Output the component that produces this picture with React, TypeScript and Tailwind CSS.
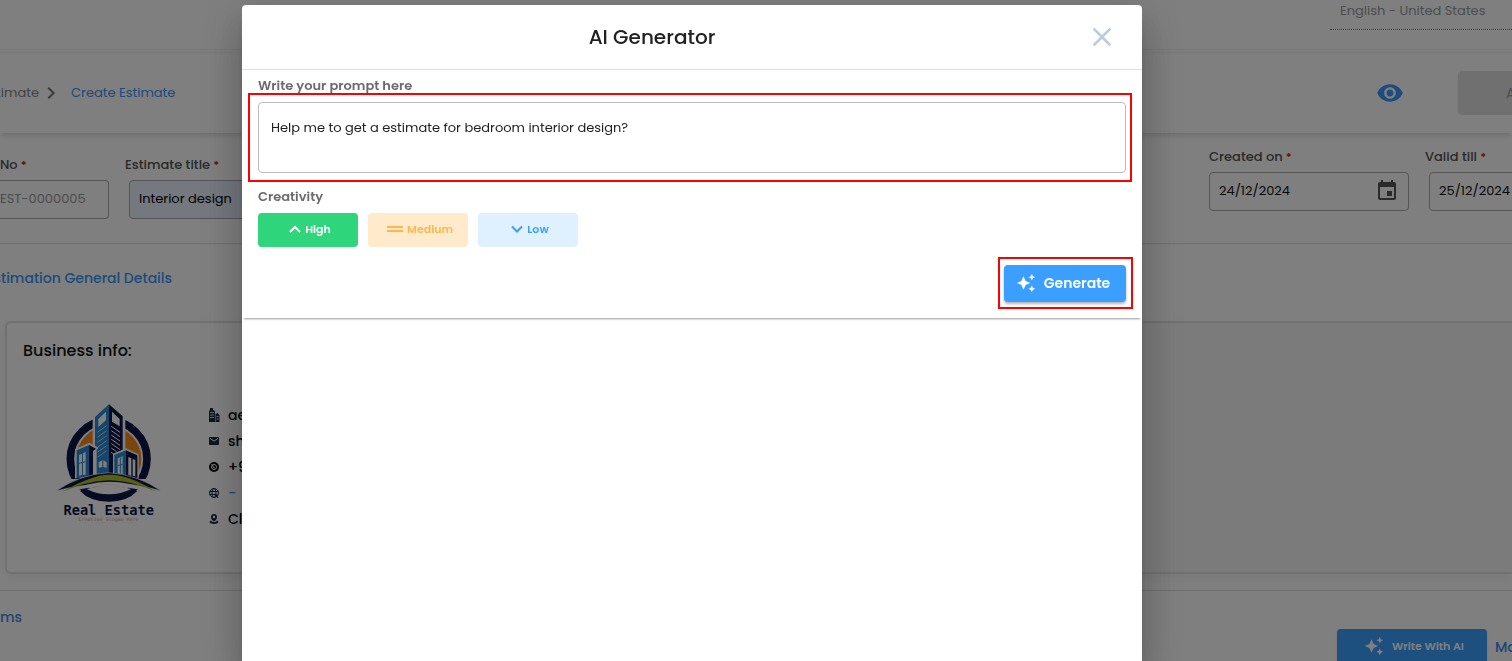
import React from "react";
import { MdAutoAwesome, MdChevronRight, MdClose, MdEmail, MdEvent, MdVisibility } from "react-icons/md";

function Required() {
  return <span className="text-[11px] text-[#e00000]">*</span>;
}

function EstateLogo() {
  return (
    <svg viewBox="45 21 321 363" className="h-[121px] w-[107px]" role="img" aria-label="Real Estate">
      <circle cx="206" cy="192" r="115" fill="none" stroke="#0c1646" strokeWidth="23" />
      <circle cx="206" cy="192" r="98" fill="#f58a1c" />
      <path d="M80 252 L332 252 L300 284 Q206 262 112 284 Z" fill="#fff" />
      <path d="M120 288 Q206 262 292 288 Q262 320 206 320 Q150 320 120 288Z" fill="#0c1646" />
      <path d="M140 282 Q206 262 274 282 Q244 298 206 298 Q168 298 140 282Z" fill="#fff" />
      <path d="M158 62 L206 22 L256 62 L256 245 L158 245Z" fill="#fff" />
      <path d="M165 66 L207 28 L207 240 L165 240Z" fill="#2b8bd2" />
      <path d="M207 28 L248 64 L248 240 L207 240Z" fill="#0c1646" />
      <path d="M175 72 L198 50 L198 76 L175 96Z M216 50 L239 72 L239 94 L216 80Z" fill="#fff" />
      <path d="M172 112 L200 92 M172 127 L200 107 M172 142 L200 122 M172 157 L200 137 M172 172 L200 152 M172 187 L200 167" stroke="#fff" strokeWidth="2" />
      <path d="M214 94 L240 112 M214 107 L240 125 M214 120 L240 138 M214 133 L240 151 M214 146 L240 164 M214 159 L230 170 M214 172 L222 178" stroke="#fff" strokeWidth="3" />
      <path d="M176 202 L187 196 L187 216 L176 218Z M190 196 L200 202 L200 218 L190 216Z" fill="#fff" />
      <path d="M105 162 L148 143 L176 158 L170 164 L170 245 L105 250Z" fill="#fff" />
      <path d="M110 166 L147 150 L147 244 L110 250Z" fill="#2b8bd2" />
      <path d="M147 150 L168 161 L159 168 L159 242 L147 244Z" fill="#0c1646" />
      <path d="M117 180 L126 176 L126 240 L117 242Z M129 175 L137 171 L137 239 L129 240Z" fill="#fff" />
      <path d="M117 205 L137 200" stroke="#2b8bd2" strokeWidth="3" />
      <path d="M219 176 L258 160 L296 178 L296 250 L219 245Z" fill="#fff" />
      <path d="M223 180 L258 166 L258 245 L223 240Z" fill="#2b8bd2" />
      <path d="M258 166 L292 181 L292 249 L258 245Z" fill="#0c1646" />
      <path d="M233 190 L248 184 L248 238 L233 236Z M265 186 L274 190 L274 242 L265 240Z M278 192 L286 195 L286 244 L278 242Z" fill="#fff" />
      <path d="M233 212 L248 208 M241 187 L241 237" stroke="#2b8bd2" strokeWidth="3" />
      <path d="M48 288 Q120 238 206 233 Q292 238 364 288 Q280 262 206 268 Q130 266 48 288Z" fill="#0c1646" stroke="#fff" strokeWidth="2" />
      <path d="M64 292 Q120 258 178 242 Q206 236 240 242 Q290 252 348 290 Q270 256 206 256 Q140 258 64 292Z" fill="#b3bd25" />
      <path d="M84 288 Q140 262 206 260 Q272 260 330 286 Q270 268 206 268 Q140 270 84 288Z" fill="#fff" />
      <text x="206" y="359" textAnchor="middle" fontFamily="'DejaVu Sans Mono', monospace" fontWeight="700" fontSize="41" fill="#0c1646">Real Estate</text>
      <text x="206" y="379" textAnchor="middle" fontFamily="'DejaVu Sans Mono', monospace" fontSize="15" fill="#c9a08c">Creative Slogan Here</text>
    </svg>
  );
}

function Buildings() {
  return (
    <svg viewBox="0 0 12 14" className="h-[14px] w-3" aria-hidden="true">
      <path d="M1 14V3l1-1V0h3v2l2 1v11z" fill="#1c2b3f" />
      <path d="M7.500 14V6l2-1 2 2v7z" fill="#1c2b3f" />
      <path d="M2 4.500h4M2 7h4M2 9.500h4M8.500 8.500h2M8.500 11h2" stroke="#fff" strokeWidth="0.8" />
    </svg>
  );
}

function PhoneBadge() {
  return (
    <svg viewBox="0 0 20 20" className="size-[10px]" aria-hidden="true">
      <circle cx="10" cy="10" r="10" fill="#000" />
      <circle cx="10" cy="10" r="5" fill="none" stroke="#fff" strokeWidth="2" />
      <path d="M8 8c0 3 1 4 4 4M5 5l4 3" stroke="#fff" strokeWidth="2" fill="none" />
    </svg>
  );
}

function Globe() {
  return (
    <svg viewBox="0 0 20 20" className="size-[10px]" fill="none" stroke="#1c2b3f" strokeWidth="2" aria-hidden="true">
      <circle cx="10" cy="10" r="9" />
      <ellipse cx="10" cy="10" rx="4" ry="9" />
      <path d="M1 7h18M1 13h11" />
      <path d="M11 11l8 3-3 1 3 4-2 1-3-4-2 2z" fill="#1c2b3f" stroke="none" />
    </svg>
  );
}

function PersonPin() {
  return (
    <svg viewBox="0 0 20 20" className="size-[10px]" aria-hidden="true">
      <path d="M10 0a6 6 0 0 1 6 6c0 4-3 7-6 9-3-2-6-5-6-9a6 6 0 0 1 6-6z" fill="#1c2b3f" />
      <circle cx="10" cy="6" r="2.5" fill="#fff" />
      <path d="M4 13c-6 3-2 7 6 7s12-4 6-7l-3 3h-6z" fill="#1c2b3f" />
    </svg>
  );
}

function Caret({ down = false }: { down?: boolean }) {
  return (
    <svg viewBox="0 0 12 8" className="h-2 w-3" fill="none" stroke="currentColor" strokeWidth="2" aria-hidden="true">
      <path d={down ? "M1 1.500l5 5 5-5" : "M1 7l5-5 5 5"} />
    </svg>
  );
}

function DateField({ id, label, value, inset = false }: { id: string; label: string; value: string; inset?: boolean }) {
  return (
    <div className="shrink-0">
      <label htmlFor={id} className="block h-[23px] text-[13px] leading-4 font-medium text-[#555]">
        {label} <Required />
      </label>
      <div className={`${inset ? "ml-1" : ""} flex h-[39px] w-[200px] items-center rounded border border-[#aaa] px-[9px] pb-0.5`}>
        <input id={id} defaultValue={value} className="min-w-0 flex-1 text-[13px] text-[#111] outline-none" />
        <button type="button" aria-label="Open calendar" className="text-[#555]">
          <MdEvent className="size-6" />
        </button>
      </div>
    </div>
  );
}

const contacts = [
  { icon: <Buildings />, text: "ae" },
  { icon: <MdEmail className="size-3" />, text: "sh" },
  { icon: <PhoneBadge />, text: "+9" },
  { icon: <Globe />, text: "-", link: true },
  { icon: <PersonPin />, text: "Cl" },
];

function EstimatePage() {
  return (
    <div className="flex h-screen flex-col overflow-hidden bg-white">
      <header className="flex h-[50px] shrink-0 justify-end border-b border-[#eee]">
        <select disabled aria-label="Language" className="h-[30px] w-[182px] appearance-none border-b border-dotted border-[#777] px-[10px] pb-2 text-[13px] text-[#999] opacity-100">
          <option>English - United States</option>
        </select>
      </header>
      <div className="mt-0.5 flex h-[81px] shrink-0 items-center justify-between border-t border-[#f5f5f5] shadow-md">
        <nav aria-label="Breadcrumb" className="flex items-center text-[13px]">
          <span className="flex w-[39px] justify-end overflow-hidden text-[#888]">Estimate</span>
          <MdChevronRight className="size-6 text-[#777]" />
          <a href="#create" className="pl-2 text-[#3a95f5]">Create Estimate</a>
        </nav>
        <div className="flex items-center gap-[54px]">
          <button type="button" aria-label="Preview" className="text-[#3a9bfc]">
            <MdVisibility className="size-7" />
          </button>
          <button type="button" disabled className="h-11 w-[54px] overflow-hidden rounded-l bg-[#e0e0e0] pl-12 text-left text-sm text-[#a0a0a0]">A</button>
        </div>
      </div>

      <div className="flex h-[111px] shrink-0 justify-between border-b border-[#dcdcdc]">
        <div className="flex gap-4 pt-6">
          <div className="w-[109px]">
            <label htmlFor="no" className="block h-[23px] text-[13px] leading-4 font-medium text-[#555]">No <Required /></label>
            <input id="no" disabled defaultValue="EST-0000005" className="h-[39px] w-full rounded-r border border-l-0 border-[#aaa] pb-0.5 text-[13px] text-[#999]" />
          </div>
          <div className="w-[220px]">
            <label htmlFor="title" className="block h-[23px] text-[13px] leading-4 font-medium text-[#555]">Estimate title <Required /></label>
            <input id="title" defaultValue="Interior design" className="ml-1 h-[39px] w-[216px] rounded border border-[#aaa] bg-[#e8f0fe] px-[9px] pb-0.5 text-[13px] text-black" />
          </div>
        </div>
        <div className="flex w-[303px] gap-4 overflow-hidden pt-4">
          <DateField id="created" label="Created on" value="24/12/2024" />
          <DateField id="valid" label="Valid till" value="25/12/2024" inset />
        </div>
      </div>

      <section className="h-[347px] shrink-0 border-b border-[#dcdcdc] pt-6">
        <h2 className="flex h-[53px] w-[172px] justify-end overflow-hidden text-sm font-medium whitespace-nowrap text-[#3a95f5]">Estimation General Details</h2>
        <div className="ml-[5px] flex h-[253px] rounded-l-md border-2 border-r-0 border-[#e2e2e2] shadow-[0_3px_10px_rgba(0,0,0,0.06)]">
          <div className="flex-1 px-4 pt-4">
            <h3 className="text-base leading-6 font-medium text-[#111]">Business info:</h3>
            <div className="flex gap-[46px] pt-[39px]">
              <div className="pl-8">
                <EstateLogo />
              </div>
              <ul className="text-sm font-medium text-black">
                {contacts.map((c) => (
                  <li key={c.text} className="flex h-[26px] items-center gap-2">
                    <span className="flex w-3 justify-center text-[#1c2b3f]">{c.icon}</span>
                    {c.link ? <a href="#site" className="text-[#3a95f5]">{c.text}</a> : c.text}
                  </li>
                ))}
              </ul>
            </div>
          </div>
          <div className="flex-1 bg-[#f7f7f7]" />
        </div>
      </section>

      <section className="flex shrink-0 justify-between">
        <h2 className="pt-4 text-sm font-medium text-[#3a8af0]">ms</h2>
        <div className="flex gap-2 pt-[38px]">
          <button type="button" className="flex h-9 w-[150px] items-center justify-center gap-2 rounded bg-[#3a9fff] pb-0.5 pl-1 text-[11px] font-semibold text-white shadow">
            <MdAutoAwesome className="size-5" />
            Write With AI
          </button>
          <a href="#more" className="w-[17px] overflow-hidden pt-2 text-sm font-medium text-[#3a8af0]">Mo</a>
        </div>
      </section>
    </div>
  );
}

function GeneratorDialog() {
  return (
    <div className="fixed inset-0 flex justify-center overflow-hidden bg-black/50 pt-[5px] pr-32">
      <div role="dialog" aria-labelledby="dialog-title" className="h-screen w-[900px] rounded bg-white shadow-[0_11px_15px_-7px_rgba(0,0,0,0.2),0_24px_38px_3px_rgba(0,0,0,0.14),0_9px_46px_8px_rgba(0,0,0,0.12)]">
        <div className="flex h-[65px] items-center border-b border-[#e0e0e0] px-4">
          <h1 id="dialog-title" className="flex-1 text-center text-xl font-medium text-[#212121]">AI Generator</h1>
          <div className="flex w-20 justify-end">
            <button type="button" aria-label="Close" className="flex size-12 items-center justify-center text-[#bccbdd]">
              <MdClose className="size-8" />
            </button>
          </div>
        </div>
        <form className="flex flex-col px-4 pt-2 pb-4 shadow-[0_3px_2px_-2px_rgba(0,0,0,0.4)]" onSubmit={(e) => e.preventDefault()}>
          <label htmlFor="prompt" className="text-[13px] leading-4 font-semibold text-[#6b6b6b]">Write your prompt here</label>
          <div className="relative mt-2 h-[71px]">
            <textarea id="prompt" defaultValue="Help me to get a estimate for bedroom interior design?" className="block h-full w-full resize-none rounded border border-[#bdbdbd] px-3 py-4 text-[13px] leading-[18px] text-[#212121] outline-none" />
            <div className="pointer-events-none absolute -top-[9px] -right-1.5 -bottom-[9px] -left-2.5 border-2 border-[#ff0000]" />
          </div>
          <fieldset className="pt-4">
            <legend className="float-left w-full text-[13px] leading-4 font-semibold text-[#6b6b6b]">Creativity</legend>
            <div className="flex w-full gap-[10px] pt-2 text-[11px] font-semibold">
              <button type="button" className="flex h-[34px] w-[100px] items-center justify-center gap-1 rounded bg-[#2fd57b] pb-0.5 pl-1 text-white">
                <Caret />
                High
              </button>
              <button type="button" className="flex h-[34px] w-[100px] items-center justify-center gap-1 rounded bg-[#ffeacc] pb-0.5 pl-1 text-[#ffb74d]">
                <svg viewBox="0 0 16 8" className="h-2 w-4" aria-hidden="true"><path d="M0 1h16v2H0zM0 5h16v2H0z" fill="currentColor" /></svg>
                Medium
              </button>
              <button type="button" className="flex h-[34px] w-[100px] items-center justify-center gap-1 rounded bg-[#dff1ff] pb-0.5 pl-1 text-[#3a9fff]">
                <Caret down />
                Low
              </button>
            </div>
          </fieldset>
          <div className="relative mt-[18px] self-end">
            <button type="submit" className="flex h-[37px] w-[122px] items-center justify-center gap-2 rounded bg-[#3a9fff] pr-1 pb-0.5 text-sm font-semibold text-white shadow-[0_2px_3px_rgba(0,0,0,0.3)]">
              <MdAutoAwesome className="size-5" />
              Generate
            </button>
            <div className="pointer-events-none absolute -top-2 -right-[7px] -bottom-[7px] -left-1.5 border-2 border-[#ff0000]" />
          </div>
        </form>
      </div>
    </div>
  );
}

export default function App() {
  return (
    <main className="font-['Poppins','Inter',sans-serif]">
      <EstimatePage />
      <GeneratorDialog />
    </main>
  );
}
